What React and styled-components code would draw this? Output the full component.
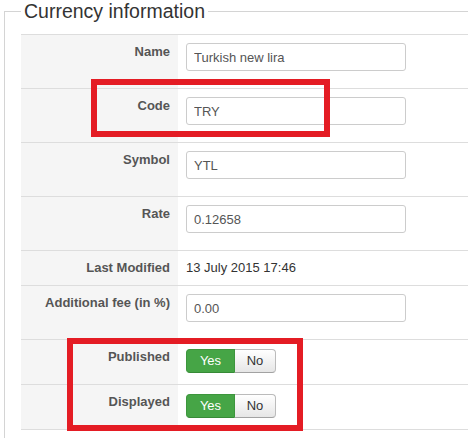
import React from "react";
import styled, { createGlobalStyle } from "styled-components";

const Global = createGlobalStyle`
  html, body {
    margin: 0;
    padding: 0;
    overflow: hidden;
    background: #fff;
  }
  body {
    font-family: "Liberation Sans", Arial, Helvetica, sans-serif;
    font-size: 13px;
    line-height: 18px;
    color: #333;
  }
`;

const Page = styled.div`
  position: relative;
  width: 468px;
  height: 438px;
  overflow: hidden;
`;

const Fieldset = styled.fieldset`
  margin: 0 0 0 4px;
  padding: 11px 0 60px 16px;
  border: 1px solid #d4d4d4;
  width: 620px;
  min-width: 0;
  box-sizing: border-box;
`;

const Legend = styled.legend`
  padding: 0 3px;
  font-size: 19.5px;
  line-height: 23px;
  color: #333;
  font-weight: normal;
`;

const Rows = styled.div`
  display: flex;
  flex-direction: column;
  border-bottom: 1px solid #ddd;
`;

const Row = styled.div`
  display: flex;
  border-top: 1px solid #ddd;
`;

const Label = styled.div`
  flex: none;
  width: 157px;
  box-sizing: border-box;
  padding: 8px 8px;
  background: #f5f5f5;
  text-align: right;
  font-weight: bold;
  color: #555;
  white-space: nowrap;
`;

const Value = styled.div`
  flex: 1;
  padding: 8px 8px;
  color: #333;
`;

const TextInput = styled.input`
  display: block;
  width: 220px;
  height: 28px;
  box-sizing: border-box;
  margin: 0 0 9px;
  padding: 4px 7px;
  border: 1px solid #ccc;
  border-radius: 3px;
  font: 13px/18px "Liberation Sans", Arial, sans-serif;
  color: #555;
  background: #fff;
  outline: none;
`;

const Toggle = styled.div`
  display: inline-flex;
  margin: 1px 0 3px;
`;

const ToggleButton = styled.button`
  width: ${p => (p.$active ? 49 : 41)}px;
  height: 24px;
  box-sizing: border-box;
  padding: 2px 0;
  text-align: center;
  font: 13px/18px "Liberation Sans", Arial, sans-serif;
  cursor: pointer;
  border: 1px solid ${p => (p.$active ? "#3d963d" : "#bbb")};
  border-bottom-color: ${p => (p.$active ? "#378a37" : "#a2a2a2")};
  color: ${p => (p.$active ? "#fff" : "#333")};
  background: ${p =>
    p.$active ? "#46a546" : "linear-gradient(#ffffff, #e6e6e6)"};
  &:first-child {
    border-radius: 4px 0 0 4px;
  }
  &:last-child {
    border-radius: 0 4px 4px 0;
    border-left: none;
  }
`;

const Highlight = styled.div`
  position: absolute;
  box-sizing: border-box;
  border: 6px solid #e41c24;
  left: ${p => p.$x}px;
  top: ${p => p.$y}px;
  width: ${p => p.$w}px;
  height: ${p => p.$h}px;
  pointer-events: none;
`;

const fields = [
  { label: "Name", input: "Turkish new lira" },
  { label: "Code", input: "TRY" },
  { label: "Symbol", input: "YTL" },
  { label: "Rate", input: "0.12658" },
  { label: "Last Modified", text: "13 July 2015 17:46" },
  { label: "Additional fee (in %)", input: "0.00" },
  { label: "Published", toggle: true },
  { label: "Displayed", toggle: true },
];

function YesNo() {
  return (
    <Toggle>
      <ToggleButton type="button" $active>
        Yes
      </ToggleButton>
      <ToggleButton type="button">No</ToggleButton>
    </Toggle>
  );
}

export default function App() {
  return (
    <Page>
      <Global />
      <Fieldset>
        <Legend>Currency information</Legend>
        <Rows>
          {fields.map(f => (
            <Row key={f.label}>
              <Label>{f.label}</Label>
              <Value>
                {f.input !== undefined && <TextInput defaultValue={f.input} />}
                {f.text}
                {f.toggle && <YesNo />}
              </Value>
            </Row>
          ))}
        </Rows>
      </Fieldset>
      <Highlight $x={91} $y={79} $w={239} $h={58} />
      <Highlight $x={67} $y={338} $w={236} $h={93} />
    </Page>
  );
}
